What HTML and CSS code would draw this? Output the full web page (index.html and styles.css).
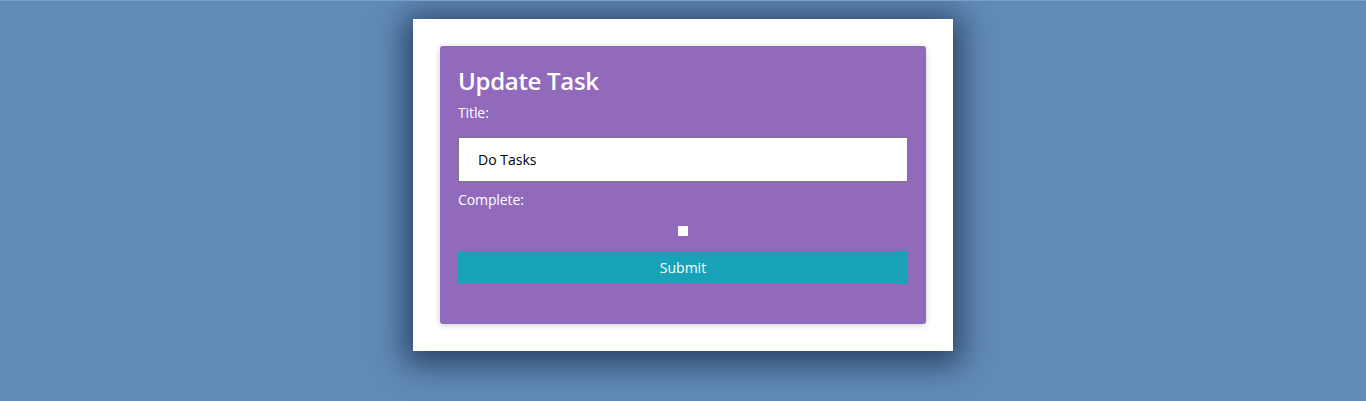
FILE: index.html
```html
<!DOCTYPE html>
<html>
<head>
<meta charset="utf-8">
<link rel="stylesheet" href="styles.css">
</head>
<body>
<div class="page">
  <div class="card">
    <form class="panel">
      <h2 class="heading">Update Task</h2>
      <label class="label" for="title">Title:</label>
      <input class="text-input" id="title" type="text" value="Do Tasks">
      <label class="label" for="complete">Complete:</label>
      <div class="check-row"><input class="check" id="complete" type="checkbox"></div>
      <button class="submit" type="button">Submit</button>
    </form>
  </div>
</div>
</body>
</html>
```
FILE: styles.css
```css
html, body {
  margin: 0;
  padding: 0;
  height: 100%;
}
body {
  background: #628bb8;
  font-family: "Open Sans", "Noto Sans", sans-serif;
  border-top: 1px solid #7aa0c8;
  box-sizing: border-box;
}
.page {
  display: flex;
  justify-content: center;
  padding-top: 18px;
}
.card {
  width: 540px;
  box-sizing: border-box;
  background: #fff;
  padding: 27px;
  box-shadow: 0 5px 30px 8px rgba(20, 40, 70, 0.75);
}
.panel {
  display: flex;
  flex-direction: column;
  background: #916abc;
  border-radius: 3px;
  padding: 19px 18px 40px;
  box-shadow: 0 1px 6px rgba(0, 0, 0, 0.2);
  color: #fff;
}
.heading {
  margin: 0 0 6px;
  font-size: 24px;
  font-weight: 600;
  line-height: 32px;
  letter-spacing: -0.3px;
}
.label {
  font-size: 14px;
  line-height: 20px;
  letter-spacing: -0.1px;
}
.text-input {
  margin: 14px 0 8px;
  height: 45px;
  box-sizing: border-box;
  border: 1px solid #7a7a7a;
  padding: 0 19px;
  font-family: inherit;
  font-size: 14px;
  color: #000;
  background: #fff;
  outline: none;
}
.check-row {
  display: flex;
  justify-content: center;
  padding: 16px 0 15px;
}
.check {
  appearance: none;
  -webkit-appearance: none;
  margin: 0;
  width: 10px;
  height: 10px;
  background: #fff;
  border-radius: 1px;
}
.submit {
  height: 33px;
  border: none;
  border-radius: 2px;
  background: #17a2b8;
  color: #fff;
  font-family: inherit;
  font-size: 14px;
}
```
